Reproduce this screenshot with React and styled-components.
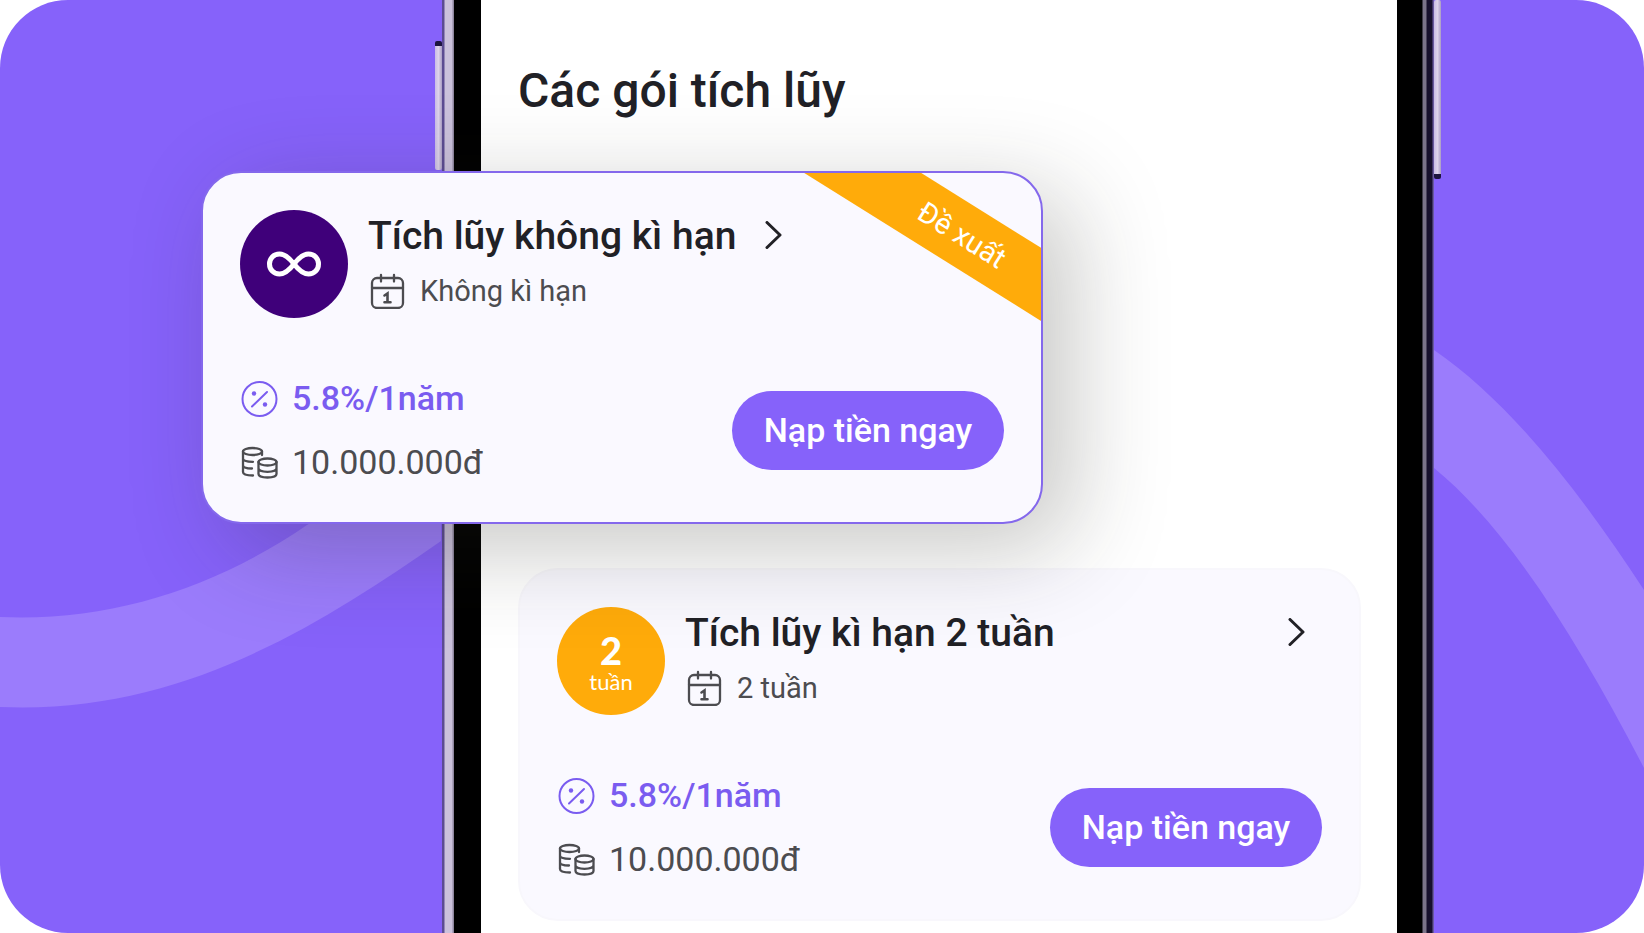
import React from 'react'
import styled, { createGlobalStyle } from 'styled-components'

const colors = {
  primary: '#8662fa',
  stripe: '#9b7cfc',
  infinity: '#3f007a',
  amber: '#ffab0a',
  card: '#faf9ff',
  textPrimary: '#212126',
  textSecondary: '#4c4c50'
}

const GlobalStyle = createGlobalStyle`
  * {
    box-sizing: border-box;
  }

  body {
    margin: 0;
    background: #fff;
    font-family: Roboto, sans-serif;
    color: ${colors.textPrimary};
  }

  h1, h2, p, ul {
    margin: 0;
    padding: 0;
  }
`

const Stage = styled.main`
  position: relative;
  display: grid;
  grid-template-columns: 435fr 1006fr 203fr;
  min-height: 100vh;
  overflow: hidden;
  border-radius: 68px;
  background: ${colors.primary};
`

const Stripes = styled.svg`
  position: absolute;
  inset: 0;
  width: 100%;
  height: 100%;
  fill: ${colors.stripe};
`

const Phone = styled.div`
  position: relative;
  grid-column: 2;
  display: flex;
  min-width: 0;
`

const SideKey = styled.div`
  flex: none;
  width: 7px;
  height: ${({ $height }) => $height}px;
  margin-top: ${({ $top }) => $top}px;
  border: 0 solid #1d1440;
  border-width: ${({ $bottom }) => ($bottom ? '0 0 5px' : '5px 0 0')};
  border-radius: 2px;
  background: linear-gradient(90deg, #c9bce6, #ddd3ea 50%, #a99cc4);
`

const LeftEdge = styled.div`
  flex: none;
  width: 12px;
  background: linear-gradient(90deg, #5c4c92 0 2px, #cbc1dc 3px 10px, #8f869f 11px);
`

const RightEdge = styled.div`
  flex: none;
  width: 12px;
  background: linear-gradient(90deg, #3d3a45 0 1px, #7b7489 1px 4px, #17102c 5px 10px, #6a5aa0 11px);
`

const Screen = styled.div`
  flex: 1;
  min-width: 0;
  padding: 0 36px 0 37px;
  border: 0 solid #000;
  border-width: 0 25px 0 27px;
  background: #fff;
`

const Heading = styled.h1`
  margin: 63px 0 52px;
  font-size: 48px;
  line-height: 56px;
  font-weight: 500;
`

const Packages = styled.ul`
  display: flex;
  flex-direction: column;
  gap: 44px;
  list-style: none;
`

const Card = styled.li`
  position: relative;
  padding: 37px 37px 28px;
  border: 2px solid #f8f7fc;
  border-radius: 40px;
  background: ${colors.card};
`

const FeaturedCard = styled(Card)`
  z-index: 1;
  margin: 0 318px 0 -317px;
  border-color: #8468ec;
  box-shadow: 28px 24px 96px rgba(40, 40, 30, 0.26);
`

const RibbonClip = styled.div`
  position: absolute;
  inset: 0;
  overflow: hidden;
  border-radius: 38px;
  pointer-events: none;
`

const Ribbon = styled.span`
  position: absolute;
  top: 31px;
  right: -121px;
  width: 400px;
  background: ${colors.amber};
  color: #fff;
  font-size: 29px;
  line-height: 62px;
  text-align: center;
  transform: rotate(32deg);
`

const CardHead = styled.div`
  display: flex;
  gap: 20px;
`

const Badge = styled.div`
  flex: none;
  display: flex;
  flex-direction: column;
  align-items: center;
  justify-content: center;
  width: 108px;
  height: 108px;
  border-radius: 50%;
  background: ${({ $color }) => $color};
  color: #fff;
  font-family: Lato, sans-serif;
`

const BadgeNumber = styled.strong`
  margin-top: 4px;
  font-size: 38px;
  line-height: 38px;
  font-weight: 900;
`

const BadgeUnit = styled.span`
  font-size: 22px;
  line-height: 26px;
`

const HeadText = styled.div`
  flex: 1;
  min-width: 0;
`

const TitleRow = styled.div`
  display: flex;
  align-items: center;
  justify-content: ${({ $spread }) => ($spread ? 'space-between' : 'flex-start')};
  gap: 29px;
  padding-right: 16px;
`

const Title = styled.h2`
  font-size: 39px;
  line-height: 52px;
  font-weight: 500;
  white-space: nowrap;
`

const MoreLink = styled.a`
  display: flex;
  color: inherit;
`

const Term = styled.p`
  display: flex;
  align-items: center;
  gap: 14px;
  margin-top: 2px;
  padding-left: 2px;
  color: ${colors.textSecondary};
  font-size: 29px;
  line-height: 54px;
`

const CardFoot = styled.div`
  display: flex;
  align-items: center;
  justify-content: space-between;
  margin-top: 48px;
`

const Fact = styled.p`
  display: flex;
  align-items: center;
  gap: 14px;
  color: ${({ $accent }) => ($accent ? '#7a5cf0' : colors.textSecondary)};
  font-size: 34px;
  line-height: 64px;
  font-weight: ${({ $accent }) => ($accent ? 500 : 400)};
`

const TopUpButton = styled.button`
  width: 272px;
  height: 79px;
  padding: 0;
  border: 0;
  border-radius: 40px;
  background: ${colors.primary};
  color: #fff;
  font: 500 34px/40px Roboto, sans-serif;
  cursor: pointer;
`

const InfinityIcon = () => (
  <svg width="56" height="28" viewBox="0 0 56 28" fill="none" stroke="#fff" strokeWidth="5">
    <path d="M28 14C23 7.500 19 4 13.500 4C7.500 4 3.500 8.500 3.500 14C3.500 19.500 7.500 24 13.500 24C19 24 23 20.500 28 14C33 7.500 37 4 42.500 4C48.500 4 52.500 8.500 52.500 14C52.500 19.500 48.500 24 42.500 24C37 24 33 20.500 28 14Z" />
  </svg>
)

const ChevronIcon = () => (
  <svg width="18" height="30" viewBox="0 0 18 30" fill="none" stroke="currentColor" strokeWidth="3" strokeLinecap="round" strokeLinejoin="round">
    <path d="M2 1.500L15 14L2 26.500" />
  </svg>
)

const CalendarIcon = () => (
  <svg width="36" height="36" viewBox="0 0 36 36" fill="none" stroke="currentColor" strokeWidth="2.300" strokeLinecap="round">
    <rect x="2" y="5" width="31" height="30" rx="5" />
    <path d="M2 15H33M11 2V8.500M24 2V8.500" />
    <path d="M14.500 22.500L17.500 20.500V29M14.500 29.200H20.500" strokeWidth="2.600" />
  </svg>
)

const PercentIcon = () => (
  <svg width="38" height="38" viewBox="0 0 38 38" fill="none" stroke="currentColor" strokeWidth="2" strokeLinecap="round">
    <circle cx="19.500" cy="20" r="17" />
    <path d="M12 27.500L27 13" />
    <circle cx="14" cy="14.500" r="2.200" fill="currentColor" stroke="none" />
    <circle cx="25" cy="25.500" r="2.200" fill="currentColor" stroke="none" />
  </svg>
)

const CoinsIcon = () => (
  <svg width="38" height="34" viewBox="0 -1 38 34" fill="none" stroke="currentColor" strokeWidth="2.300" strokeLinecap="round">
    <ellipse cx="12.500" cy="5.500" rx="9.500" ry="3.500" />
    <path d="M3 5.500V26C3 28 6 29.500 13 29.500M22 5.500V9M3 12.500C3 14.500 6 15.800 13 15.800M3 19.200C3 21.200 6 22.500 12 22.500" />
    <ellipse cx="27.500" cy="16" rx="9" ry="3.500" />
    <path d="M18.500 16V28C18.500 30 22 31.500 27.500 31.500C33 31.500 36.500 30 36.500 28V16M18.500 22.300C18.500 24.300 22 25.800 27.500 25.800C33 25.800 36.500 24.300 36.500 22.300" />
  </svg>
)

const PackageContent = ({ title, term, badge, badgeColor, spread }) => (
  <>
    <CardHead>
      <Badge $color={badgeColor}>{badge}</Badge>
      <HeadText>
        <TitleRow $spread={spread}>
          <Title>{title}</Title>
          <MoreLink href="#" aria-label={title}>
            <ChevronIcon />
          </MoreLink>
        </TitleRow>
        <Term>
          <CalendarIcon />
          {term}
        </Term>
      </HeadText>
    </CardHead>
    <CardFoot>
      <div>
        <Fact $accent>
          <PercentIcon />
          5.8%/1năm
        </Fact>
        <Fact>
          <CoinsIcon />
          10.000.000đ
        </Fact>
      </div>
      <TopUpButton type="button">Nạp tiền ngay</TopUpButton>
    </CardFoot>
  </>
)

const App = () => (
  <>
    <GlobalStyle />
    <Stage>
      <Stripes viewBox="0 0 1644 933" preserveAspectRatio="none" aria-hidden="true">
        <path d="M0 617C110 622 215 588 307 525L441 440V541C320 625 180 715 0 707Z" />
        <path d="M1434 350C1510 402 1580 492 1644 590V768C1580 645 1510 530 1434 468Z" />
      </Stripes>
      <Phone>
        <SideKey $top={41} $height={129} />
        <LeftEdge />
        <Screen>
          <Heading>Các gói tích lũy</Heading>
          <Packages>
            <FeaturedCard>
              <PackageContent
                title="Tích lũy không kì hạn"
                term="Không kì hạn"
                badge={<InfinityIcon />}
                badgeColor={colors.infinity}
              />
              <RibbonClip>
                <Ribbon>Đề xuất</Ribbon>
              </RibbonClip>
            </FeaturedCard>
            <Card>
              <PackageContent
                title="Tích lũy kì hạn 2 tuần"
                term="2 tuần"
                badge={
                  <>
                    <BadgeNumber>2</BadgeNumber>
                    <BadgeUnit>tuần</BadgeUnit>
                  </>
                }
                badgeColor={colors.amber}
                spread
              />
            </Card>
          </Packages>
        </Screen>
        <RightEdge />
        <SideKey $top={0} $height={179} $bottom />
      </Phone>
    </Stage>
  </>
)

export default App
